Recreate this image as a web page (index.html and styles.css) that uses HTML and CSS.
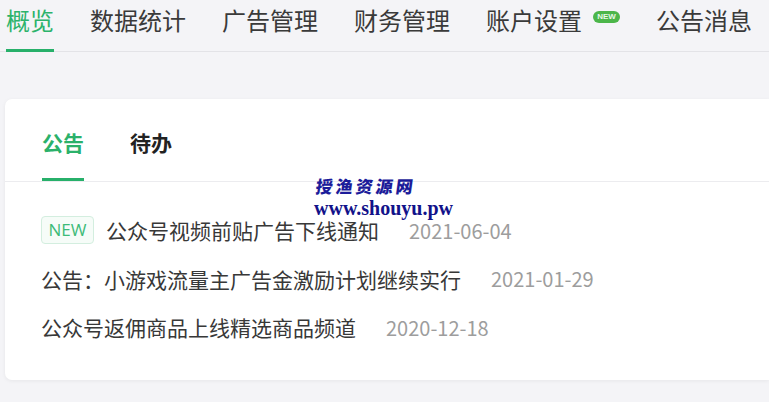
FILE: index.html
```html
<!DOCTYPE html>
<html>
<head>
    <meta charset="utf-8">
    <title>概览</title>
    <link rel="stylesheet" href="styles.css">
</head>
<body>
    <div class="nav">
        <a class="nav-item active">概览</a>
        <a class="nav-item">数据统计</a>
        <a class="nav-item">广告管理</a>
        <a class="nav-item">财务管理</a>
        <a class="nav-item">账户设置<span class="badge">NEW</span></a>
        <a class="nav-item">公告消息</a>
    </div>

    <div class="card">
        <div class="tabs">
            <span class="tab active">公告</span>
            <span class="tab">待办</span>
        </div>

        <ul class="notice-list">
            <li class="notice">
                <span class="tag">NEW</span>
                <span class="title">公众号视频前贴广告下线通知</span>
                <span class="date">2021-06-04</span>
            </li>
            <li class="notice">
                <span class="title">公告：小游戏流量主广告金激励计划继续实行</span>
                <span class="date">2021-01-29</span>
            </li>
            <li class="notice">
                <span class="title">公众号返佣商品上线精选商品频道</span>
                <span class="date">2020-12-18</span>
            </li>
        </ul>

        <div class="watermark">
            <div class="wm-name">授渔资源网</div>
            <div class="wm-url">www.shouyu.pw</div>
        </div>
    </div>
</body>
</html>
```

FILE: styles.css
```css
html, body {
    margin: 0;
    padding: 0;
    overflow: hidden;
}
body {
    font-family: "Noto Sans CJK SC", "Noto Sans", sans-serif;
    background: #f4f4f7;
    color: #333;
    width: 769px;
    height: 402px;
}
.nav {
    display: flex;
    gap: 36px;
    padding-left: 6px;
    border-bottom: 1px solid #e3e3e7;
    height: 51px;
}
.nav-item {
    font-size: 24px;
    line-height: 40px;
    height: 49px;
    color: #3a3a3a;
    border-bottom: 3px solid transparent;
    white-space: nowrap;
}
.nav-item.active {
    color: #2cb36b;
    border-bottom-color: #27b06a;
}
.badge {
    display: inline-block;
    vertical-align: top;
    margin: 11px 0 0 11px;
    width: 27px;
    height: 12px;
    line-height: 12px;
    border-radius: 6px;
    background: #4cb64a;
    color: #e8f7e8;
    font-size: 8px;
    font-weight: bold;
    text-align: center;
    font-family: "Liberation Sans", sans-serif;
}
.card {
    position: relative;
    margin: 47px 0 0 5px;
    background: #fff;
    border-radius: 7px 0 0 7px;
    box-shadow: 0 1px 4px rgba(0,0,0,0.06);
    height: 281px;
}
.tabs {
    display: flex;
    gap: 46px;
    padding-left: 37px;
    border-bottom: 1px solid #ececef;
    height: 82px;
}
.tab {
    font-size: 21px;
    font-weight: bold;
    line-height: 30px;
    padding-top: 28px;
    height: 51px;
    box-sizing: content-box;
    color: #222;
    border-bottom: 3px solid transparent;
}
.tab.active {
    color: #2bb16a;
    border-bottom-color: #27b06a;
}
.notice-list {
    list-style: none;
    margin: 0;
    padding: 24px 0 0 36px;
}
.notice {
    display: flex;
    align-items: center;
    height: 48.5px;
    font-size: 21px;
    white-space: nowrap;
}
.title {
    color: #383838;
}
.tag {
    display: inline-block;
    box-sizing: border-box;
    width: 53px;
    height: 28px;
    line-height: 26px;
    margin-right: 12px;
    border: 1px solid #d3eedf;
    border-radius: 4px;
    background: #f6fcf8;
    color: #3dbb78;
    font-size: 17px;
    text-align: center;
    font-family: "Open Sans", sans-serif;
}
.date {
    margin-left: 30px;
    color: #9d9d9d;
    font-size: 20px;
}
.watermark {
    position: absolute;
    left: 309px;
    top: 76px;
    color: #1c1c9a;
}
.wm-name {
    font-size: 17px;
    font-weight: 900;
    letter-spacing: 3px;
    line-height: 22px;
    padding-left: 2px;
    transform: skewX(-8deg);
}
.wm-url {
    font-family: "Liberation Serif", serif;
    font-weight: bold;
    font-size: 20px;
    line-height: 22px;
    color: #12128a;
}
```
